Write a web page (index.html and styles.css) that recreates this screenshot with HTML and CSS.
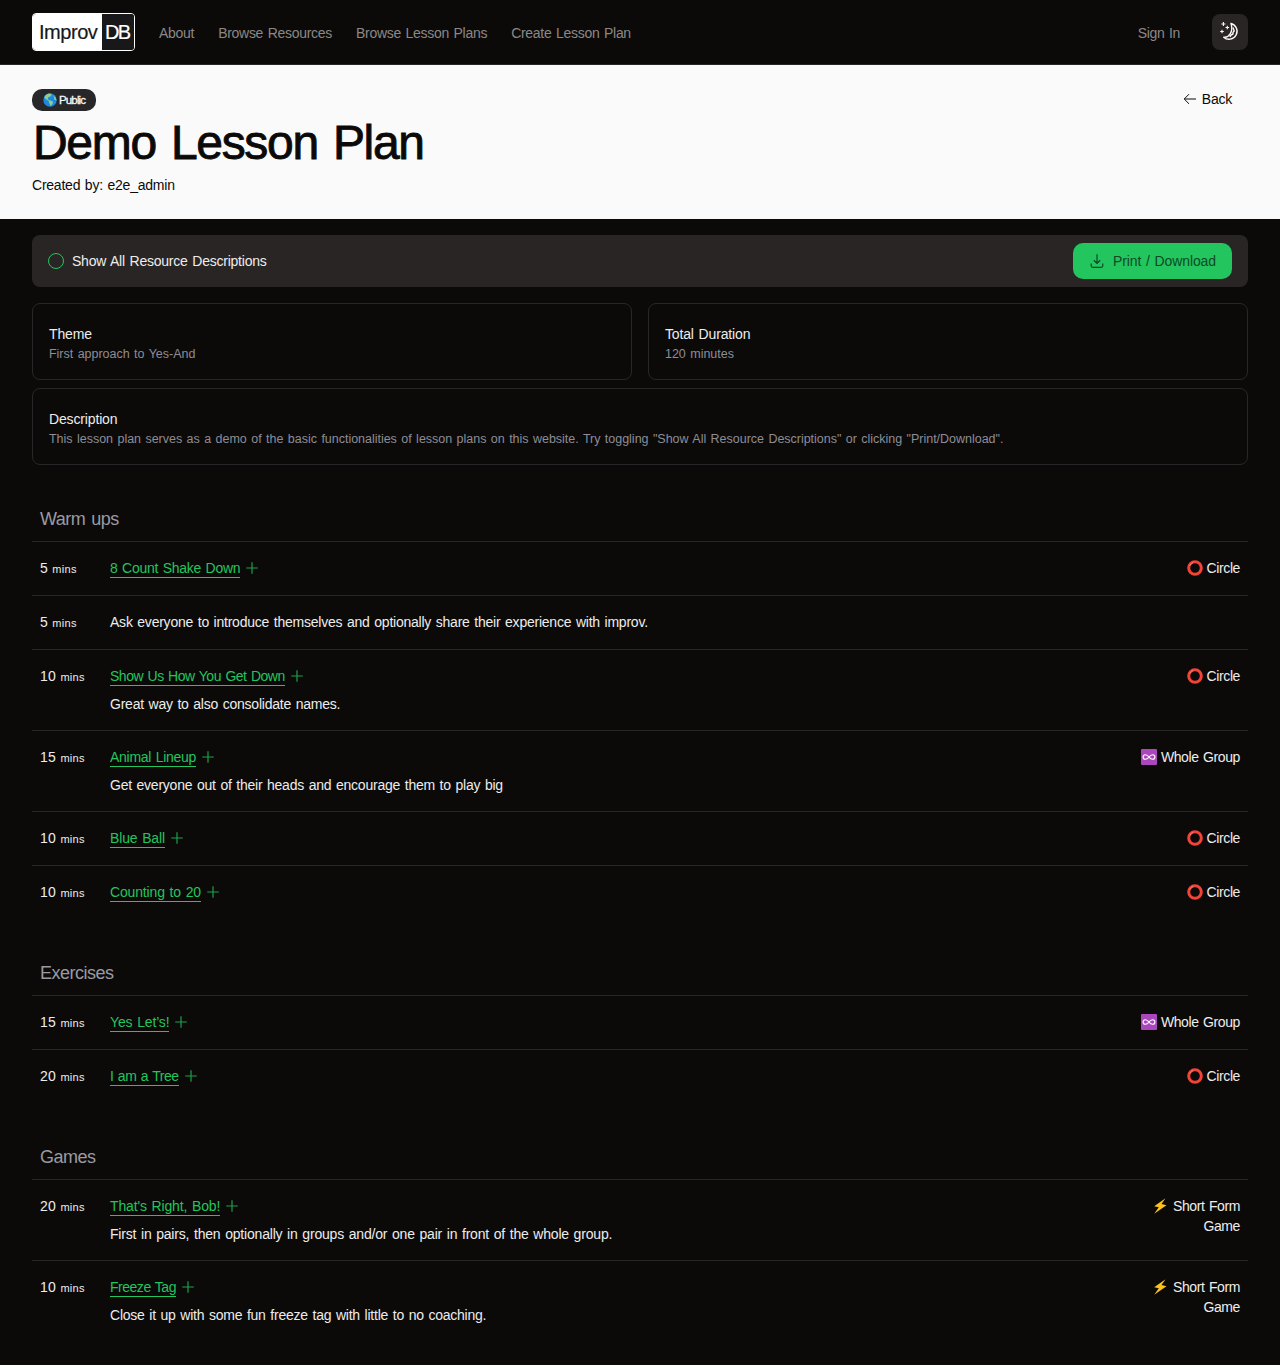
FILE: index.html
```html
<!DOCTYPE html>
<html lang="en">
<head>
<meta charset="utf-8">
<title>Demo Lesson Plan - ImprovDB</title>
<link rel="stylesheet" href="styles.css">
</head>
<body>
<svg class="symbols" aria-hidden="true">
  <symbol id="plus" viewBox="0 0 16 16"><path d="M8 2.200v11.600M2.200 8h11.600" fill="none" stroke="currentColor" stroke-width="1.200"/></symbol>
  <symbol id="circle" viewBox="0 0 16 16"><circle cx="8" cy="8" r="6.300" fill="none" stroke="#f44336" stroke-width="3"/><path d="M3 5.200Q4 3.200 6 2.400" fill="none" stroke="#ff7b72" stroke-linecap="round"/></symbol>
  <symbol id="group" viewBox="0 0 16 16"><rect width="16" height="16" rx="1" fill="#ab47bc"/><path d="M8 8C6.500 6 5.700 5.700 4.400 5.700a2.300 2.300 0 0 0 0 4.600C5.700 10.300 6.500 10 8 8s2.300-2.300 3.600-2.300a2.300 2.300 0 0 1 0 4.600C10.300 10.300 9.500 10 8 8z" fill="none" stroke="#fff" stroke-width="1.100"/></symbol>
  <symbol id="bolt" viewBox="0 0 16 16"><path d="M12.500.2 1.200 8.200l4.600 1.100L1.200 15.800 13.500 7.200 8.500 6z" fill="#fcc21b"/></symbol>
</svg>

<header class="navbar">
  <a class="logo"><span class="logo-main">Improv</span><span class="logo-db">DB</span></a>
  <nav class="nav">
    <a>About</a><a>Browse Resources</a><a>Browse Lesson Plans</a><a>Create Lesson Plan</a>
  </nav>
  <a class="sign-in">Sign In</a>
  <button class="theme-toggle" aria-label="Toggle theme">
    <svg width="20" height="20" viewBox="0 0 20 20" fill="none" stroke="#fafafa" stroke-width="1.400" stroke-linejoin="round">
      <path d="M11 1.500A8 8 0 1 1 3.700 15.200C8.500 16 13.800 10 11 1.500z"/>
      <path d="M13 5.500l1.200 3.500-1.200 1.200 0 1.800-2 1-1 2"/>
      <path d="M3.400 0v4M1.400 2h4M7.300 3.700v3.600M5.500 5.500h3.600M2 7.700v3.600M.2 9.500h3.600" stroke-width="1.100"/>
    </svg>
  </button>
</header>

<section class="hero">
  <div class="hero-text">
    <span class="badge">
      <svg width="14" height="14" viewBox="0 0 14 14"><circle cx="7" cy="7" r="6.700" fill="#1e88e5"/><path d="M1.200 4.500C2.300 2 4.500.7 7 .6L8.800 2 7 3.700 5.500 4l-.8 2L6.200 7.200 9.600 8.300 10 10 7.800 13.200 6.400 10.500 5.800 8 3 6.200zM10.500 2.500l2.200 2.300.8 2.700-2-.8z" fill="#8fcf8a"/></svg>
      <span>Public</span>
    </span>
    <h1>Demo Lesson Plan</h1>
    <p class="author">Created by: e2e_admin</p>
  </div>
  <a class="back"><svg width="14" height="14" viewBox="0 0 14 14" fill="none" stroke="currentColor"><path d="M13 7H1.500M6 2.200 1.200 7 6 11.800"/></svg><span>Back</span></a>
</section>

<main class="content">
  <div class="toolbar">
    <label class="toggle"><span class="radio"></span><span>Show All Resource Descriptions</span></label>
    <button class="print"><svg width="16" height="16" viewBox="0 0 16 16" fill="none" stroke="currentColor" stroke-width="1.200"><path d="M8 1.200v9M4.800 7.200 8 10.300l3.200-3.100M2.200 10.500v2.300q0 1.500 1.500 1.500h8.600q1.500 0 1.500-1.500v-2.300"/></svg><span>Print / Download</span></button>
  </div>

  <div class="cards">
    <article class="card"><h2>Theme</h2><p>First approach to Yes-And</p></article>
    <article class="card"><h2>Total Duration</h2><p>120 minutes</p></article>
    <article class="card wide"><h2>Description</h2><p>This lesson plan serves as a demo of the basic functionalities of lesson plans on this website. Try toggling "Show All Resource Descriptions" or clicking "Print/Download".</p></article>
  </div>

  <section class="lesson">
    <h2>Warm ups</h2>
    <div class="row">
      <span class="time">5 <small>mins</small></span>
      <div class="item"><div class="line"><a>8 Count Shake Down</a><svg><use href="#plus"/></svg></div></div>
      <div class="kind"><svg><use href="#circle"/></svg>Circle</div>
    </div>
    <div class="row">
      <span class="time">5 <small>mins</small></span>
      <div class="item"><p>Ask everyone to introduce themselves and optionally share their experience with improv.</p></div>
    </div>
    <div class="row">
      <span class="time">10 <small>mins</small></span>
      <div class="item"><div class="line"><a class="tight">Show Us How You Get Down</a><svg><use href="#plus"/></svg></div><p>Great way to also consolidate names.</p></div>
      <div class="kind"><svg><use href="#circle"/></svg>Circle</div>
    </div>
    <div class="row">
      <span class="time">15 <small>mins</small></span>
      <div class="item"><div class="line"><a>Animal Lineup</a><svg><use href="#plus"/></svg></div><p>Get everyone out of their heads and encourage them to play big</p></div>
      <div class="kind"><svg><use href="#group"/></svg>Whole Group</div>
    </div>
    <div class="row">
      <span class="time">10 <small>mins</small></span>
      <div class="item"><div class="line"><a class="loose">Blue Ball</a><svg><use href="#plus"/></svg></div></div>
      <div class="kind"><svg><use href="#circle"/></svg>Circle</div>
    </div>
    <div class="row">
      <span class="time">10 <small>mins</small></span>
      <div class="item"><div class="line"><a class="loose">Counting to 20</a><svg><use href="#plus"/></svg></div></div>
      <div class="kind"><svg><use href="#circle"/></svg>Circle</div>
    </div>
  </section>

  <section class="lesson">
    <h2>Exercises</h2>
    <div class="row">
      <span class="time">15 <small>mins</small></span>
      <div class="item"><div class="line"><a class="loose">Yes Let’s!</a><svg><use href="#plus"/></svg></div></div>
      <div class="kind"><svg><use href="#group"/></svg>Whole Group</div>
    </div>
    <div class="row">
      <span class="time">20 <small>mins</small></span>
      <div class="item"><div class="line"><a class="tight">I am a Tree</a><svg><use href="#plus"/></svg></div></div>
      <div class="kind"><svg><use href="#circle"/></svg>Circle</div>
    </div>
  </section>

  <section class="lesson">
    <h2>Games</h2>
    <div class="row">
      <span class="time">20 <small>mins</small></span>
      <div class="item"><div class="line"><a class="loose">That's Right, Bob!</a><svg><use href="#plus"/></svg></div><p class="loose">First in pairs, then optionally in groups and/or one pair in front of the whole group.</p></div>
      <div class="kind"><svg><use href="#bolt"/></svg>Short Form Game</div>
    </div>
    <div class="row">
      <span class="time">10 <small>mins</small></span>
      <div class="item"><div class="line"><a class="tight">Freeze Tag</a><svg><use href="#plus"/></svg></div><p>Close it up with some fun freeze tag with little to no coaching.</p></div>
      <div class="kind"><svg><use href="#bolt"/></svg>Short Form Game</div>
    </div>
  </section>
</main>
</body>
</html>
```
FILE: styles.css
```css
* { box-sizing: border-box; }
body {
  margin: 0;
  background: #0c0a09;
  color: #ededed;
  font: 14px/20px "Liberation Sans", Arial, sans-serif;
  letter-spacing: -.23px;
  word-spacing: 1px;
}
h1, h2, p { margin: 0; font-weight: 400; }
button { border: 0; padding: 0; font: inherit; letter-spacing: inherit; word-spacing: inherit; }
svg { flex: none; }
.symbols { display: none; }

.navbar { display: flex; align-items: center; height: 65px; padding: 0 32px; border-bottom: 1px solid #27272a; color: #8b8886; }
.logo { display: flex; width: 103px; height: 38px; border: 1px solid #fff; border-radius: 4px; overflow: hidden; font-size: 20px; line-height: 37px; letter-spacing: -.45px; -webkit-text-stroke: .2px currentColor; }
.logo-main { width: 69px; padding-left: 6px; background: #fff; color: #18181b; }
.logo-db { flex: 1; padding-left: 3px; background: #18181b; color: #fff; letter-spacing: -1.6px; }
.nav { display: flex; gap: 24px; margin-left: 24px; padding-top: 1px; letter-spacing: -.29px; }
.sign-in { margin-left: auto; padding-top: 1px; letter-spacing: -.35px; }
.theme-toggle { display: flex; align-items: center; justify-content: center; width: 36px; height: 36px; margin-left: 32px; border-radius: 8px; background: #292524; }

.hero { display: flex; justify-content: space-between; height: 154px; padding: 24px 48px 0 32px; background: #fafafa; color: #0c0a09; }
.badge { display: flex; align-items: center; gap: 2px; width: 64px; height: 22px; padding-left: 11px; border-radius: 10px; background: #27272a; color: #fafafa; font-size: 11.5px; letter-spacing: -.85px; -webkit-text-stroke: .3px currentColor; }
.hero h1 { margin-top: 8px; padding-left: 1px; font-size: 48px; line-height: 48px; letter-spacing: -1.3px; word-spacing: 3px; -webkit-text-stroke: .9px currentColor; }
.author { margin-top: 8px; }
.back { display: flex; align-items: center; gap: 5px; height: 20px; }

.content { padding: 16px 32px; }
.toolbar { display: flex; align-items: center; justify-content: space-between; height: 52px; padding: 0 16px; border-radius: 8px; background: #292524; }
.toggle { display: flex; align-items: center; gap: 8px; }
.radio { width: 16px; height: 16px; border: 1px solid #22c55e; border-radius: 50%; }
.print { display: flex; align-items: center; gap: 8px; width: 159px; height: 36px; padding-left: 16px; border-radius: 10px; background: #22c55e; color: #0f4a27; letter-spacing: -.11px; }

.cards { display: grid; grid-template-columns: 1fr 1fr; gap: 8px 16px; margin-top: 16px; }
.card { height: 77px; padding: 20px 16px; border: 1px solid #27272a; border-radius: 8px; }
.card h2 { font-size: 14px; letter-spacing: -.15px; }
.card p { font-size: 12.5px; letter-spacing: -.02px; color: #8d8d96; }
.wide { grid-column: 1 / -1; }

.lesson { margin-top: 32px; }
.lesson h2 { height: 44px; padding: 10px 8px; font-size: 18px; line-height: 24px; letter-spacing: -.5px; word-spacing: 1.5px; color: #9a9aa3; }
.row { display: flex; align-items: flex-start; min-height: 54px; padding: 16px 8px 15px; border-top: 1px solid #272625; }
.time { width: 70px; letter-spacing: .3px; word-spacing: 0; }
.time small { font-size: 11px; }
.item { flex: 1; }
.item p.loose { letter-spacing: -.19px; }
.line { display: flex; align-items: center; gap: 4px; height: 20px; color: #22c55e; letter-spacing: -.28px; }
.line a { height: 19px; line-height: 19px; border-bottom: 1px solid #22c55e; }
.line a.tight { letter-spacing: -.48px; }
.line a.loose { letter-spacing: -.15px; }
.line svg { width: 16px; height: 16px; opacity: .8; }
.line + p { margin-top: 8px; padding-bottom: 1px; }
.kind { width: 104px; letter-spacing: -.4px; text-align: right; }
.kind svg { width: 16px; height: 16px; margin-right: 4px; vertical-align: -3px; }
```
